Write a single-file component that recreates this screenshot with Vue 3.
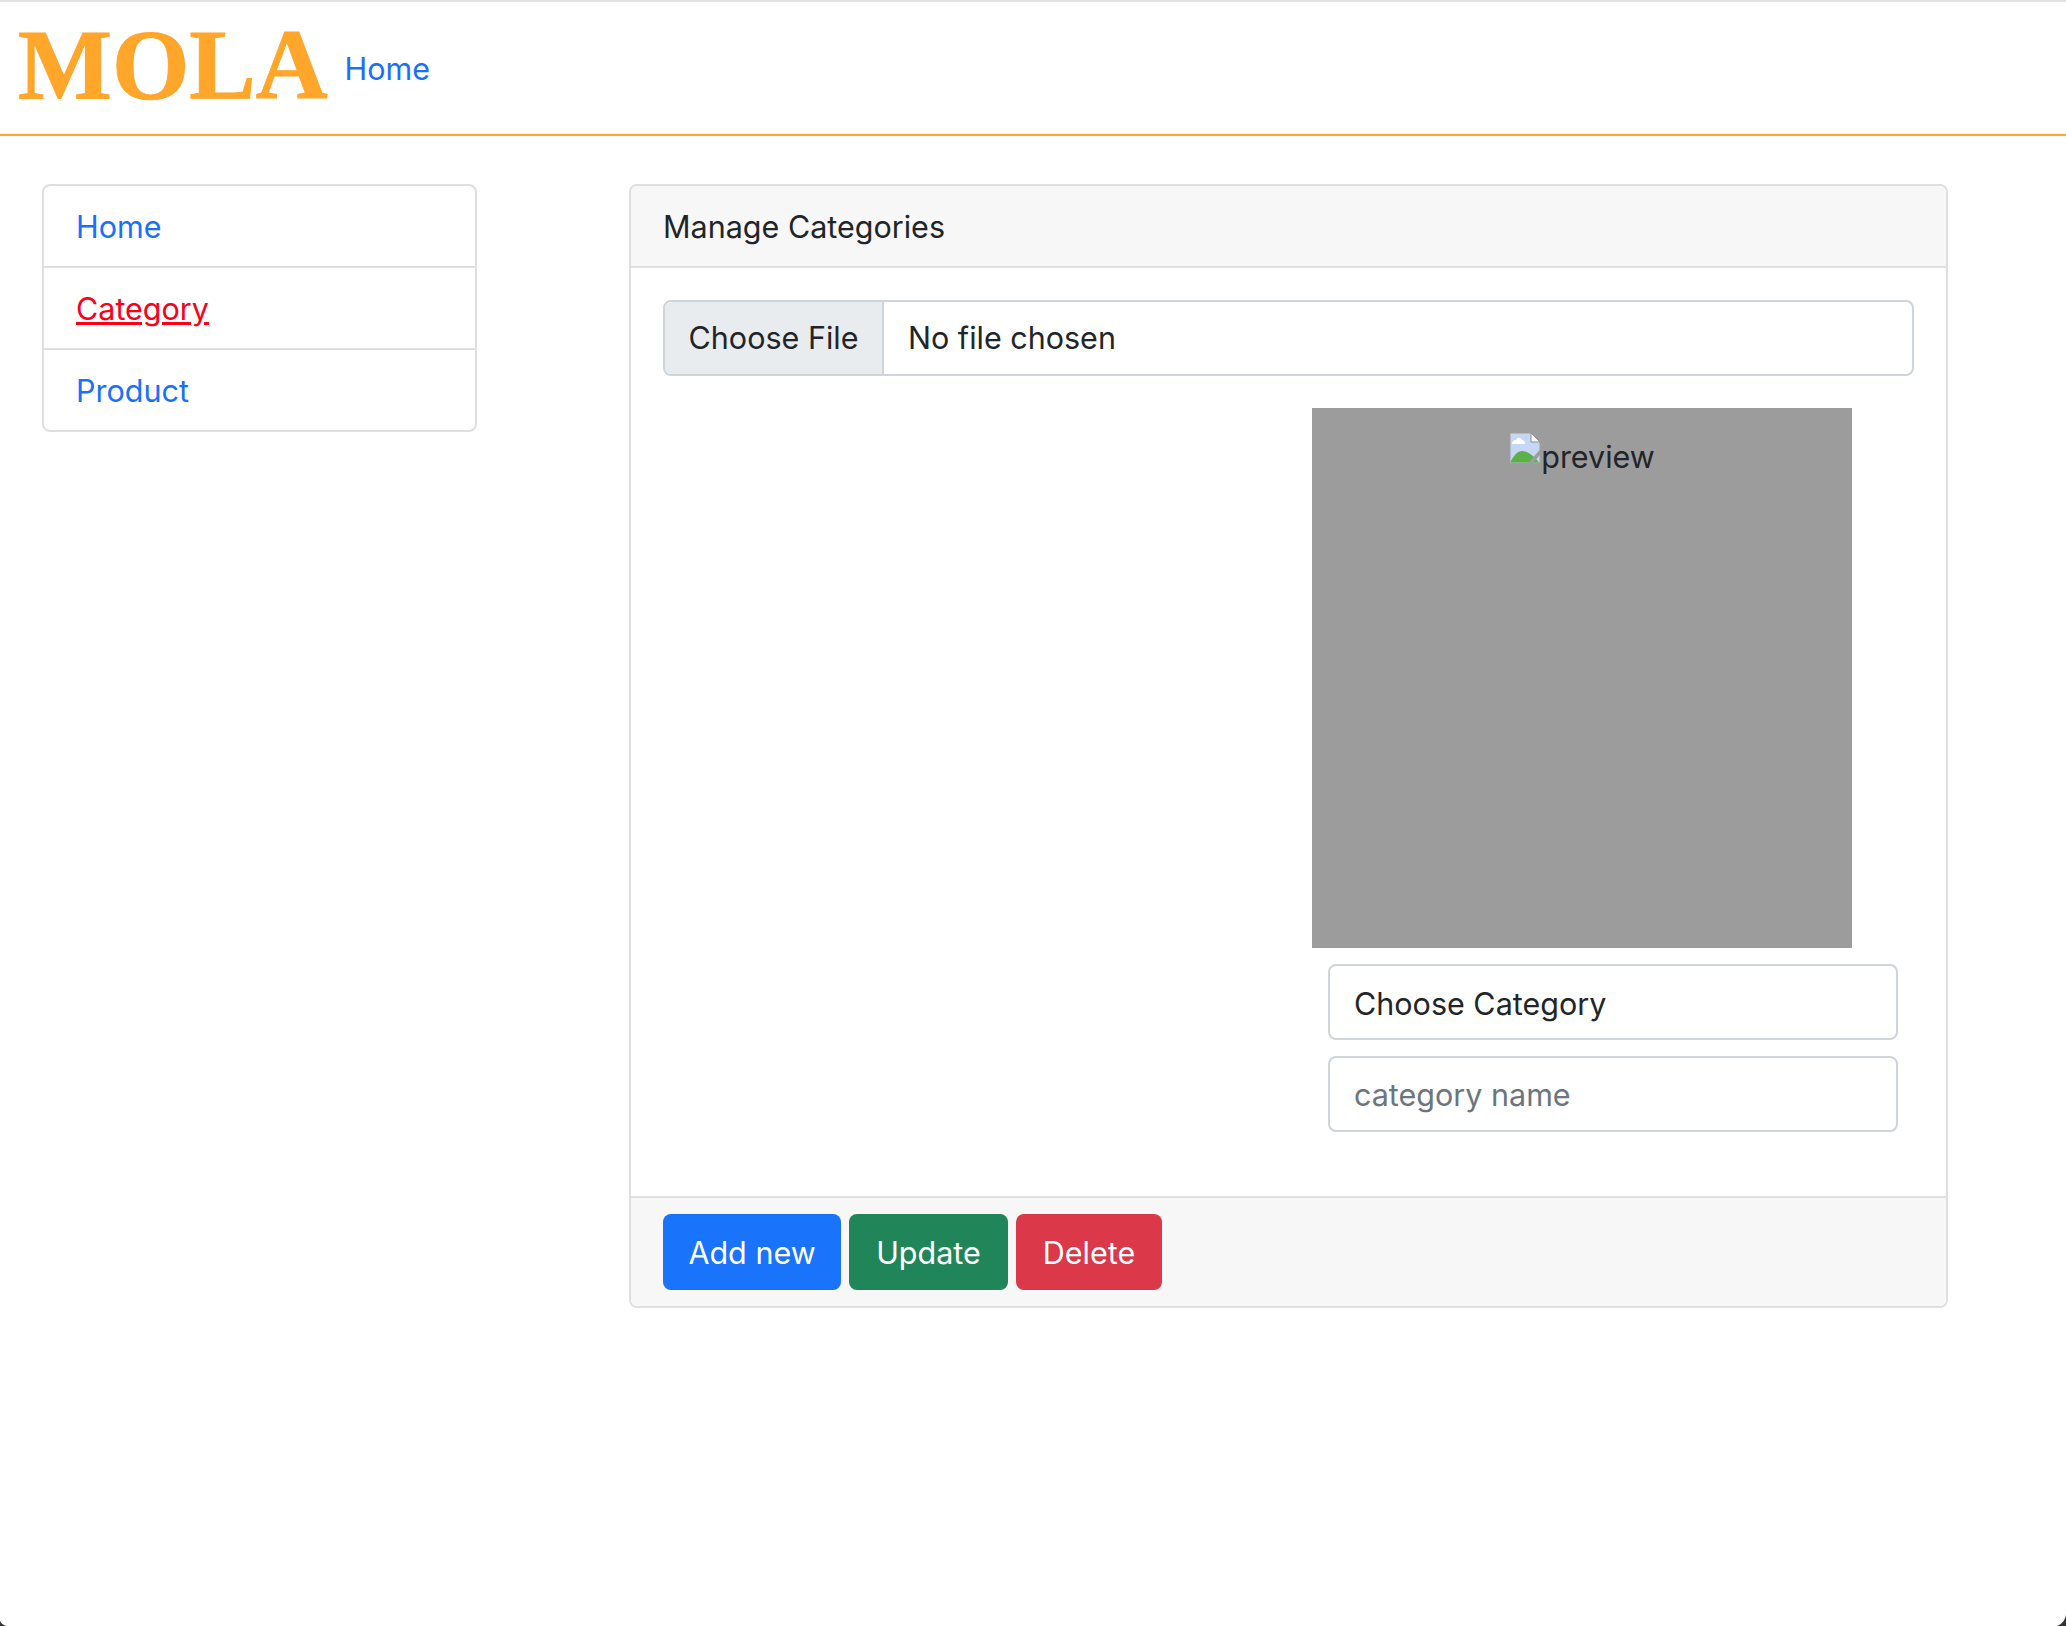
<script setup>
const items = [
  { label: 'Home', active: false },
  { label: 'Category', active: true },
  { label: 'Product', active: false },
]
</script>

<template>
  <div class="page">
    <nav class="topbar">
      <a class="brand" href="#">MOLA</a>
      <a class="nav-link" href="#">Home</a>
    </nav>
    <main class="layout">
      <ul class="side">
        <li v-for="item in items" :key="item.label" class="side-item">
          <a href="#" :class="{ active: item.active }">{{ item.label }}</a>
        </li>
      </ul>
      <section class="card">
        <header class="card-head">Manage Categories</header>
        <div class="card-body">
          <input class="file" type="file" />
          <div class="col">
            <div class="preview">
              <svg class="broken" viewBox="0 0 32 32" width="32" height="32" aria-hidden="true">
                <path d="M1 1H22L31 10V31H1Z" fill="#c6d7f4" stroke="#9f9f9f" stroke-width="1" />
                <path d="M2 30.5V29C5 23 9 19 13 19C19 19 26 25 30 30.5Z" fill="#5cb04a" />
                <path d="M3 12C3 9 5 8 7 8C8 5 12 5 13 8C15 8 16 10 16 12Z" fill="#ffffff" />
                <path d="M22 1L31 10H22Z" fill="#f6f6f6" stroke="#8f8f8f" stroke-width="1" />
                <path d="M20 33L33 18" stroke="#9c9c9c" stroke-width="3.5" />
              </svg><span class="alt">preview</span>
            </div>
            <select class="control pick">
              <option>Choose Category</option>
            </select>
            <input class="control" type="text" placeholder="category name" />
          </div>
        </div>
        <footer class="card-foot">
          <button class="btn blue" type="button">Add new</button>
          <button class="btn green" type="button">Update</button>
          <button class="btn red" type="button">Delete</button>
        </footer>
      </section>
    </main>
    <svg class="corner left" viewBox="0 0 6 5" width="6" height="5" aria-hidden="true"><path d="M0 0C1 2 3 4 6 5H0Z" fill="#333" /></svg>
    <svg class="corner right" viewBox="0 0 9 11" width="9" height="11" aria-hidden="true"><path d="M9 0C8 5 5 9 0 11H9Z" fill="#333" /></svg>
  </div>
</template>

<style>
html, body { margin: 0; background: #fff; }
</style>

<style scoped>
.page {
  position: relative;
  width: 2066px;
  height: 1626px;
  overflow: hidden;
  background: #fff;
  font-family: Inter, "Liberation Sans", sans-serif;
  font-size: 30.5px;
  line-height: 48px;
  color: #212529;
}
a { text-decoration: none; color: #1a6ffb; }
.topbar {
  box-sizing: border-box;
  height: 136px;
  display: flex;
  align-items: center;
  gap: 17px;
  padding: 0 0 0 18px;
  border-top: 2px solid #e2e2e2;
  border-bottom: 2px solid #ffa62b;
}
.brand {
  font-family: "Liberation Serif", serif;
  font-weight: 700;
  font-size: 99.5px;
  line-height: 100px;
  padding-bottom: 6px;
  color: #ffa62b;
  -webkit-text-stroke: 1px #ffa62b;
}
.nav-link { padding-top: 1px; }
.layout {
  display: grid;
  grid-template-columns: 435px 1319px;
  column-gap: 152px;
  align-items: start;
  padding: 48px 0 0 42px;
}
.side {
  list-style: none;
  margin: 0;
  padding: 0;
  border: 2px solid #dfdfdf;
  border-radius: 8px;
}
.side-item {
  padding: 17px 32px 15px;
  height: 48px;
}
.side-item + .side-item { border-top: 2px solid #dfdfdf; }
.side-item .active { color: #fb0019; text-decoration: underline; }
.card {
  border: 2px solid #dfdfdf;
  border-radius: 8px;
  overflow: hidden;
}
.card-head {
  padding: 17px 32px 15px;
  background: #f7f7f7;
  border-bottom: 2px solid #dfdfdf;
}
.card-body {
  display: flex;
  flex-direction: column;
  padding: 32px;
  height: 864px;
}
.file {
  box-sizing: border-box;
  display: block;
  width: 100%;
  height: 76px;
  padding: 12px 24px;
  border: 2px solid #ced4da;
  border-radius: 8px;
  background: #fff;
  font: inherit;
  color: #212529;
}
.file::file-selector-button {
  box-sizing: border-box;
  width: 219px;
  height: 72px;
  margin: -12px 24px -12px -24px;
  padding: 0 20px;
  border: 0;
  border-right: 2px solid #ced4da;
  border-radius: 0;
  background: #e9ecef;
  font: inherit;
  color: #212529;
}
.col {
  display: flex;
  flex-direction: column;
  gap: 16px;
  align-self: flex-end;
  width: 602px;
  margin-top: 32px;
}
.preview {
  box-sizing: border-box;
  width: 540px;
  height: 540px;
  padding-top: 24px;
  background: #9c9c9c;
  text-align: center;
}
.broken { vertical-align: 4px; }
.control {
  box-sizing: border-box;
  display: block;
  width: 570px;
  height: 76px;
  margin-left: 16px;
  padding: 12px 24px;
  border: 2px solid #ced4da;
  border-radius: 8px;
  background: #fff;
  font: inherit;
  color: #212529;
  outline: none;
}
.pick { appearance: none; padding-top: 14px; }
.control::placeholder { color: #6c757d; opacity: 1; }
.card-foot {
  display: flex;
  gap: 8px;
  padding: 16px 32px;
  background: #f7f7f7;
  border-top: 2px solid #dfdfdf;
}
.btn {
  box-sizing: border-box;
  height: 76px;
  padding: 2px 20px 0;
  border: 0;
  border-radius: 8px;
  font: inherit;
  color: #fff;
}
.blue { background: #1a73fb; width: 178px; }
.green { background: #21855a; width: 159px; }
.red { background: #db384a; width: 146px; }
.corner { position: absolute; bottom: 0; }
.corner.left { left: 0; }
.corner.right { right: 0; }
</style>
